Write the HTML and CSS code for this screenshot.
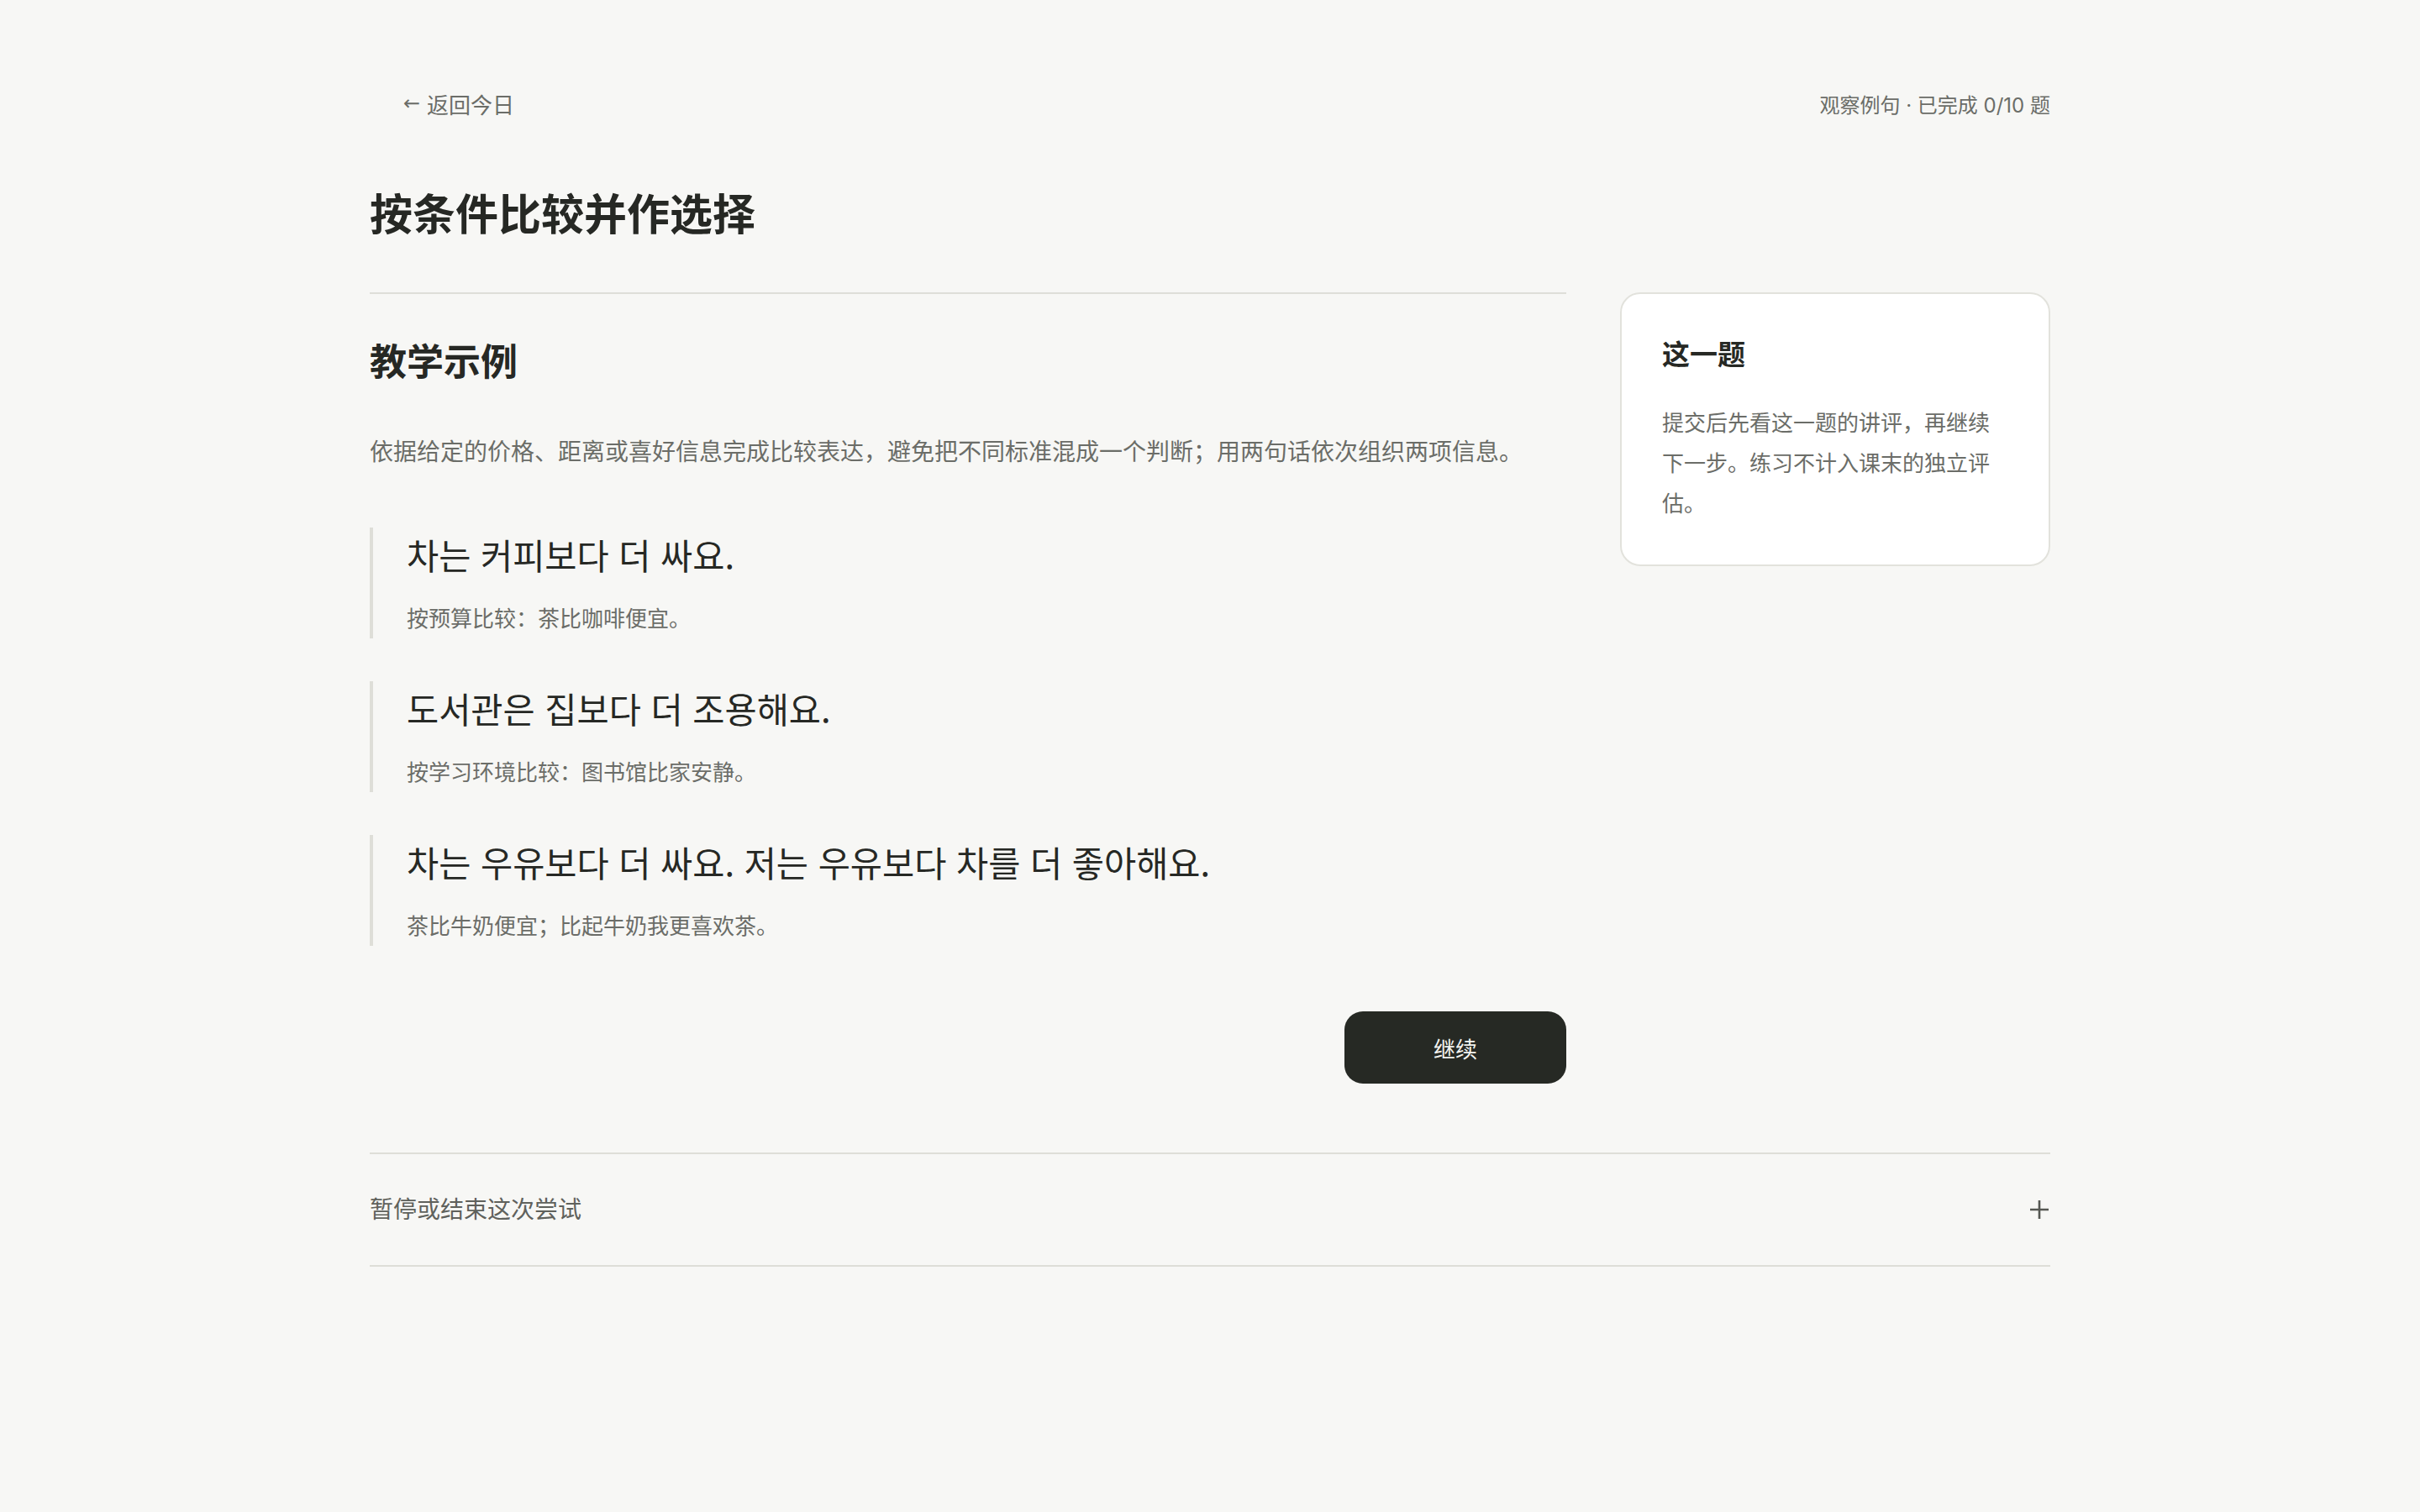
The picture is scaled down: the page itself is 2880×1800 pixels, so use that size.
FILE: index.html
```html
<!DOCTYPE html>
<html lang="zh-CN">
<head>
    <meta charset="UTF-8" />
    <meta name="viewport" content="width=device-width, initial-scale=1.0" />
    <title>按条件比较并作选择</title>
    <link rel="stylesheet" href="styles.css">
</head>
<body>
    <div class="page">
        <!-- TOP BAR -->
        <div class="topbar">
            <a class="back" href="#"><span class="arrow">←</span> 返回今日</a>
            <div class="progress">观察例句 · 已完成 0/10 题</div>
        </div>

        <h1 class="title">按条件比较并作选择</h1>

        <div class="layout">
            <!-- LESSON -->
            <div class="lesson">
                <h2>教学示例</h2>
                <p class="intro">依据给定的价格、距离或喜好信息完成比较表达，避免把不同标准混成一个判断；用两句话依次组织两项信息。</p>

                <div class="examples">
                    <div class="example">
                        <div class="ko" lang="ko">차는 커피보다 더 싸요.</div>
                        <div class="zh">按预算比较：茶比咖啡便宜。</div>
                    </div>
                    <div class="example">
                        <div class="ko" lang="ko">도서관은 집보다 더 조용해요.</div>
                        <div class="zh">按学习环境比较：图书馆比家安静。</div>
                    </div>
                    <div class="example">
                        <div class="ko" lang="ko">차는 우유보다 더 싸요. 저는 우유보다 차를 더 좋아해요.</div>
                        <div class="zh">茶比牛奶便宜；比起牛奶我更喜欢茶。</div>
                    </div>
                </div>

                <div class="actions">
                    <button class="next">继续</button>
                </div>
            </div>

            <!-- SIDE NOTE -->
            <aside class="note">
                <h3>这一题</h3>
                <p>提交后先看这一题的讲评，再继续下一步。练习不计入课末的独立评估。</p>
            </aside>
        </div>

        <!-- PAUSE / END -->
        <div class="pause">
            <span>暂停或结束这次尝试</span>
            <svg class="plus" width="26" height="26" viewBox="0 0 26 26" aria-hidden="true">
                <path d="M13 2v22M2 13h22" stroke="currentColor" stroke-width="2.6" fill="none" />
            </svg>
        </div>
    </div>
</body>
</html>
```

FILE: styles.css
```css
body {
    margin: 0;
    background: #f7f7f5;
    color: #262824;
    font-family: Inter, "Noto Sans CJK SC", sans-serif;
}
.page {
    width: 2000px;
    margin: 0 auto;
    padding-top: 94px;
    padding-bottom: 120px;
}

/* Top bar */
.topbar {
    display: flex;
    justify-content: space-between;
    align-items: center;
    height: 58px;
    font-size: 26px;
    color: #6b6d68;
}
.back {
    color: #6b6d68;
    text-decoration: none;
    padding-left: 40px;
    display: flex;
    align-items: center;
    gap: 8px;
}
.arrow {
    font-family: "DejaVu Sans", sans-serif;
    font-size: 24px;
}
.progress {
    font-size: 24px;
}

.title {
    margin: 70px 0 0;
    font-size: 51px;
    line-height: 68px;
    font-weight: 700;
}

/* Layout */
.layout {
    display: grid;
    grid-template-columns: 1424px 512px;
    gap: 64px;
    margin-top: 58px;
    align-items: start;
}
.lesson {
    border-top: 2px solid #deded8;
    padding-top: 50px;
}
.lesson h2 {
    margin: 0;
    font-size: 44px;
    line-height: 62px;
    font-weight: 700;
}
.intro {
    margin: 52px 0 0;
    font-size: 28px;
    line-height: 48px;
    color: #6b6d68;
}

.examples {
    display: flex;
    flex-direction: column;
    gap: 51px;
    margin-top: 66px;
}
.example {
    border-left: 4px solid #deded8;
    padding: 2px 0 2px 40px;
}
.ko {
    font-family: "Noto Sans CJK KR", sans-serif;
    font-size: 41.5px;
    line-height: 60px;
    color: #262824;
}
.zh {
    margin-top: 26px;
    font-size: 26px;
    line-height: 42px;
    color: #6b6d68;
}

.actions {
    display: flex;
    justify-content: flex-end;
    margin-top: 78px;
}
.next {
    width: 264px;
    height: 86px;
    border: none;
    border-radius: 22px;
    background: #262924;
    color: #f4f4f0;
    font-family: inherit;
    font-size: 26px;
    cursor: pointer;
}
.next:hover {
    background: #111310;
}

/* Side note */
.note {
    background: #fff;
    border: 2px solid #e2e2dc;
    border-radius: 24px;
    padding: 48px;
}
.note h3 {
    margin: 0;
    font-size: 33px;
    line-height: 48px;
    font-weight: 700;
}
.note p {
    margin: 34px 0 0;
    font-size: 26px;
    line-height: 48px;
    color: #6b6d68;
}

/* Pause section */
.pause {
    display: flex;
    justify-content: space-between;
    align-items: center;
    margin-top: 82px;
    padding: 43px 0;
    line-height: 46px;
    border-top: 2px solid #deded8;
    border-bottom: 2px solid #deded8;
    font-size: 28px;
    color: #5f615c;
}
.plus {
    color: #555752;
}
```
